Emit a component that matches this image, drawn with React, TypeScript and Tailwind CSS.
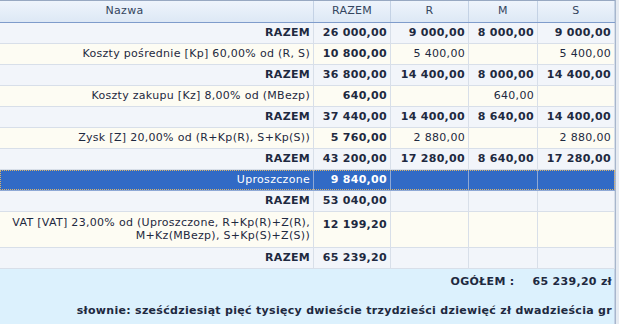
import React from "react";

type Row = {
  name: string;
  name2?: string;
  razem: string;
  r?: string;
  m?: string;
  s?: string;
  kind: "sum" | "data" | "sel";
  tall?: boolean;
};

const rows: Row[] = [
  { name: "RAZEM", razem: "26 000,00", r: "9 000,00", m: "8 000,00", s: "9 000,00", kind: "sum" },
  { name: "Koszty pośrednie [Kp] 60,00% od (R, S)", razem: "10 800,00", r: "5 400,00", s: "5 400,00", kind: "data" },
  { name: "RAZEM", razem: "36 800,00", r: "14 400,00", m: "8 000,00", s: "14 400,00", kind: "sum" },
  { name: "Koszty zakupu [Kz] 8,00% od (MBezp)", razem: "640,00", m: "640,00", kind: "data" },
  { name: "RAZEM", razem: "37 440,00", r: "14 400,00", m: "8 640,00", s: "14 400,00", kind: "sum" },
  { name: "Zysk [Z] 20,00% od (R+Kp(R), S+Kp(S))", razem: "5 760,00", r: "2 880,00", s: "2 880,00", kind: "data" },
  { name: "RAZEM", razem: "43 200,00", r: "17 280,00", m: "8 640,00", s: "17 280,00", kind: "sum" },
  { name: "Uproszczone", razem: "9 840,00", kind: "sel" },
  { name: "RAZEM", razem: "53 040,00", kind: "sum" },
  {
    name: "VAT [VAT] 23,00% od (Uproszczone, R+Kp(R)+Z(R),",
    name2: "M+Kz(MBezp), S+Kp(S)+Z(S))",
    razem: "12 199,20",
    kind: "data",
    tall: true,
  },
  { name: "RAZEM", razem: "65 239,20", kind: "sum" },
];

function DataRow({ row }: { row: Row }) {
  const bg =
    row.kind === "sum" ? "bg-[#f2f5fa]" : row.kind === "data" ? "bg-[#fdfcf3]" : "bg-[#316ac5]";
  const line = row.kind === "sel" ? "border-[#8fa9d6]" : "border-[#d8dfe9]";
  const txt = row.kind === "sel" ? "text-white" : "text-[#1e2940]";
  const h = row.tall ? "h-[36px]" : "h-[21px]";
  const sumBold = row.kind === "sum" ? "font-bold" : "font-normal";
  const cell = `border-r border-b ${line} pr-[3px] text-right whitespace-nowrap overflow-hidden`;
  return (
    <div className={`relative flex ${h} ${bg} ${txt}`}>
      <div
        className={`${cell} w-[314px] ${sumBold} ${
          row.tall ? "flex flex-col justify-center leading-[13px] pb-[1px]" : "leading-[20px]"
        }`}
      >
        <div>{row.name}</div>
        {row.name2 && <div>{row.name2}</div>}
      </div>
      <div className={`${cell} w-[77px] font-bold ${row.tall ? "leading-[13px] pt-[6px]" : "leading-[20px]"}`}>
        {row.razem}
      </div>
      <div className={`${cell} w-[78px] ${sumBold} leading-[20px]`}>{row.r}</div>
      <div className={`${cell} w-[69px] ${sumBold} leading-[20px]`}>{row.m}</div>
      <div className={`${cell} w-[77px] ${sumBold} leading-[20px]`}>{row.s}</div>
      {row.kind === "sel" && (
        <div className="pointer-events-none absolute left-0 top-0 h-[20px] w-[615px] border border-dotted border-[#d9b36a]" />
      )}
    </div>
  );
}

export default function App() {
  return (
    <div
      className="relative h-[324px] w-[619px] overflow-hidden bg-[#dcf1fd] text-[11px]"
      style={{ fontFamily: '"DejaVu Sans", Verdana, sans-serif', letterSpacing: "0.3px" }}
    >
      <div className="flex h-full">
        <div className="flex w-[615px] flex-col">
          {/* header */}
          <div className="flex h-[23px] border-t border-[#97a8c2] border-b border-b-[#7f9ccb] bg-gradient-to-b from-[#eef4fc] to-[#dde8f5] text-[#34455e]">
            <div className="w-[314px] border-r border-[#c4d2e5] pr-[64px] text-center leading-[20px]">Nazwa</div>
            <div className="w-[77px] border-r border-[#c4d2e5] text-center leading-[20px]">RAZEM</div>
            <div className="w-[78px] border-r border-[#c4d2e5] text-center leading-[20px]">R</div>
            <div className="w-[69px] border-r border-[#c4d2e5] text-center leading-[20px]">M</div>
            <div className="w-[77px] border-r border-[#c4d2e5] text-center leading-[20px]">S</div>
          </div>
          {rows.map((r, i) => (
            <DataRow key={i} row={r} />
          ))}
          {/* footer */}
          <div className="flex flex-1 flex-col border-r border-[#c4d2e5] bg-[#dcf1fd] font-bold text-[#1e2940]">
            <div className="mt-[1px] flex h-[24px] items-center justify-end pr-[2px]">
              <span>OGÓŁEM :</span>
              <span className="ml-[18px]">65 239,20 zł</span>
            </div>
            <div className="mt-[7px] flex h-[20px] items-center justify-end pr-[2px]">
              słownie: sześćdziesiąt pięć tysięcy dwieście trzydzieści dziewięć zł dwadzieścia gr
            </div>
          </div>
        </div>
        <div className="w-[4px] border-l border-[#a7b6cc] bg-[#e6ebf2]" />
      </div>
    </div>
  );
}
